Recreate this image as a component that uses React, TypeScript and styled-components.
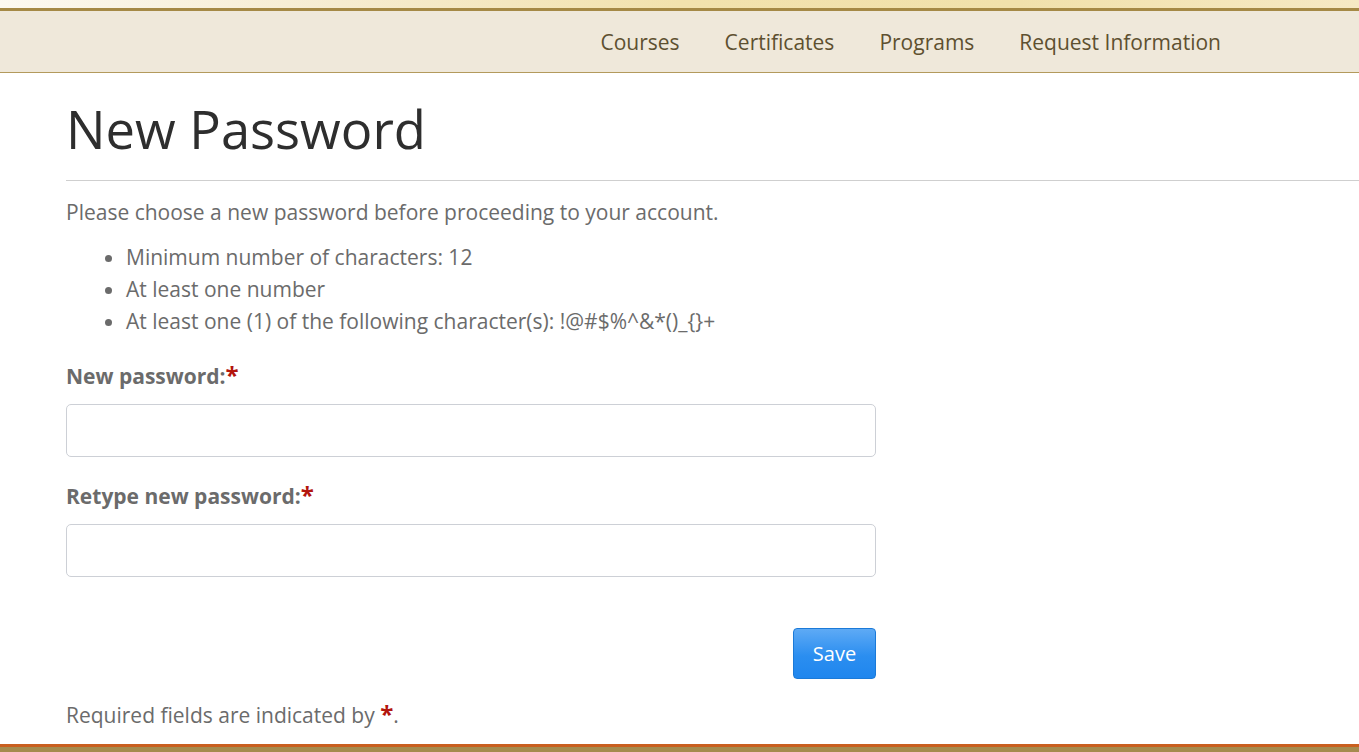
import React from 'react'
import styled, { createGlobalStyle } from 'styled-components'

const GlobalStyle = createGlobalStyle`
    html, body {
        margin: 0;
        padding: 0;
        background: #fff;
        font-family: "Open Sans", "Noto Sans", sans-serif;
        overflow: hidden;
    }
`

const TopStrip = styled.div`
    height: 8px;
    background: linear-gradient(90deg, #fcf9f1 0%, #f6ecd0 25%, #f2e2ad 50%, #f1e1ab 75%, #f6e9c4 100%);
    border-bottom: 3px solid #a58945;
`

const NavBar = styled.nav`
    height: 61px;
    background: #efe8da;
    border-bottom: 1px solid #b39a5c;
    display: flex;
    justify-content: flex-end;
    align-items: center;
    padding-right: 138px;
`

const NavLink = styled.a`
    font-size: 21px;
    color: #5e5030;
    text-decoration: none;
    margin-left: 45px;
    cursor: pointer;
    &:hover {
        text-decoration: underline;
    }
`

const Main = styled.main`
    padding-left: 66px;
    height: 671px;
    box-sizing: border-box;
`

const Title = styled.h1`
    font-size: 52.5px;
    font-weight: 400;
    color: #2e2e2e;
    margin: 0;
    padding-top: 24px;
    padding-bottom: 19px;
    line-height: 64px;
    border-bottom: 1px solid #cfcfcf;
`

const Intro = styled.p`
    font-size: 21px;
    color: #6b6b6b;
    margin: 16px 0 14px;
    line-height: 30px;
`

const Rules = styled.ul`
    margin: 0;
    padding-left: 60px;
    color: #6b6b6b;
    font-size: 21px;
    line-height: 32px;
`

const Form = styled.form`
    width: 810px;
    margin-top: 23px;
`

const Field = styled.div`
    margin-bottom: 23px;
`

const Label = styled.label`
    display: block;
    font-size: 21px;
    font-weight: 700;
    color: #6b6b6b;
    margin-bottom: 13px;
    line-height: 30px;
`

const Star = styled.span`
    color: #b3150d;
    font-size: 24px;
    font-weight: 700;
`

const Input = styled.input`
    display: block;
    width: 100%;
    height: 53px;
    box-sizing: border-box;
    border: 1px solid #cdd0d6;
    border-radius: 5px;
    font-size: 18px;
    padding: 0 12px;
    outline: none;
`

const Actions = styled.div`
    display: flex;
    justify-content: flex-end;
    margin-top: 51px;
`

const SaveButton = styled.button`
    width: 83px;
    height: 51px;
    border: 1px solid #1b7ad8;
    border-radius: 4px;
    background: linear-gradient(180deg, #5eaaf5 0%, #2b8ef0 55%, #1f86ee 100%);
    color: #fff;
    font-family: "Open Sans", sans-serif;
    font-size: 20px;
    cursor: pointer;
`

const Note = styled.p`
    font-size: 21px;
    color: #6b6b6b;
    margin: 20px 0 0;
    line-height: 30px;
`

const Footer = styled.footer`
    border-top: 3px solid #c95f1f;
    background: #a58b4e;
    height: 20px;
`

export default function App() {
    return (
        <React.Fragment>
            <GlobalStyle />
            <TopStrip />
            <NavBar>
                <NavLink>Courses</NavLink>
                <NavLink>Certificates</NavLink>
                <NavLink>Programs</NavLink>
                <NavLink>Request Information</NavLink>
            </NavBar>
            <Main>
                <Title>New Password</Title>
                <Intro>Please choose a new password before proceeding to your account.</Intro>
                <Rules>
                    <li>Minimum number of characters: 12</li>
                    <li>At least one number</li>
                    <li>At least one (1) of the following character(s): !@#$%^&amp;*()_{'{}'}+</li>
                </Rules>
                <Form onSubmit={e => e.preventDefault()}>
                    <Field>
                        <Label>New password:<Star>*</Star></Label>
                        <Input type="password" />
                    </Field>
                    <Field>
                        <Label>Retype new password:<Star>*</Star></Label>
                        <Input type="password" />
                    </Field>
                    <Actions>
                        <SaveButton type="submit">Save</SaveButton>
                    </Actions>
                </Form>
                <Note>Required fields are indicated by <Star>*</Star>.</Note>
            </Main>
            <Footer />
        </React.Fragment>
    )
}
